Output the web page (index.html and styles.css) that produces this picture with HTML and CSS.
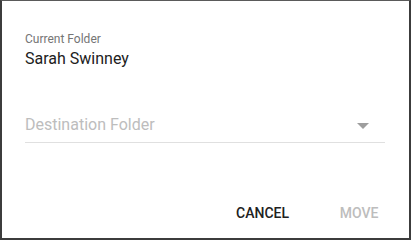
FILE: index.html
```html
<!DOCTYPE html>
<html>
<head>
<meta charset="utf-8">
<link rel="stylesheet" href="styles.css">
</head>
<body>
<div class="dialog">
  <div class="content">
    <div class="label">Current Folder</div>
    <div class="value">Sarah Swinney</div>
    <div class="select">
      <span class="placeholder">Destination Folder</span>
      <span class="arrow"></span>
    </div>
  </div>
  <div class="actions">
    <button class="btn btn-cancel">CANCEL</button>
    <button class="btn btn-move">MOVE</button>
  </div>
</div>
</body>
</html>
```

FILE: styles.css
```css
html, body {
  margin: 0;
  padding: 0;
  background: #ffffff;
}
.dialog {
  box-sizing: border-box;
  width: 411px;
  height: 240px;
  border-top: 1px solid #5a5a5a;
  border-left: 2px solid #3c3c3c;
  border-right: 2px solid #3c3c3c;
  border-bottom: 2px solid #3c3c3c;
  background: #fff;
  display: flex;
  flex-direction: column;
  font-family: Roboto, "Liberation Sans", sans-serif;
}
.content {
  padding: 30px 24px 0 23px;
}
.label {
  font-size: 12px;
  line-height: 16px;
  color: #757575;
}
.value {
  font-size: 16px;
  line-height: 24px;
  color: #212121;
}
.select {
  margin-top: 42px;
  display: flex;
  align-items: center;
  padding-bottom: 5px;
  border-bottom: 1px solid #e0e0e0;
}
.placeholder {
  flex: 1;
  font-size: 16px;
  line-height: 24px;
  color: #bdbdbd;
}
.arrow {
  width: 0;
  height: 0;
  border-left: 6px solid transparent;
  border-right: 6px solid transparent;
  border-top: 6px solid #9e9e9e;
  margin-right: 16px;
  margin-top: 2px;
}
.actions {
  margin-top: auto;
  display: flex;
  justify-content: flex-end;
  gap: 30px;
  padding: 0 18px 7px 0;
}
.btn {
  font-family: Roboto, "Liberation Sans", sans-serif;
  font-size: 14px;
  font-weight: 500;
  height: 36px;
  line-height: 36px;
  min-width: 64px;
  padding: 0 8px;
  border: none;
  background: transparent;
  text-align: center;
}
.btn-cancel {
  color: #212121;
}
.btn-move {
  color: #bdbdbd;
}
```
